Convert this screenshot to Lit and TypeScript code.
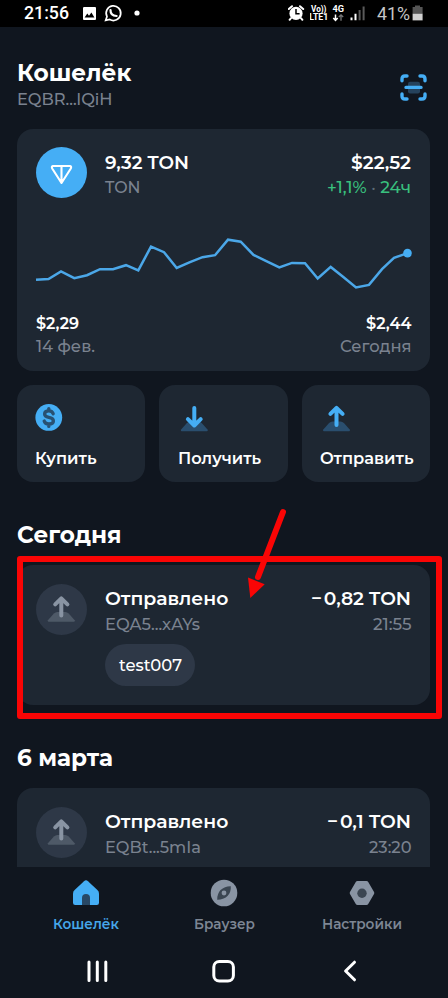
import { LitElement, html, css, svg } from "lit";
import { customElement } from "lit/decorators.js";

/* One line of text, fitted to a width; its box is exactly as tall as the capitals. */
const label = (text: string, width: number, size: number, cls = "") => {
  const cap = size * 0.7;
  return html`<svg class="label ${cls}" width=${width} height=${cap}>
    <text x="0" y=${cap} font-size=${size} textLength=${width} lengthAdjust="spacingAndGlyphs">${text}</text>
  </svg>`;
};

const points: [number, number][] = [
  [0, 49.8], [12.5, 49], [25, 41.4], [38.3, 48.2], [51, 45.2], [64, 39.2], [77, 39.2], [90, 35.2], [102.3, 40.4],
  [115, 16.6], [128, 22.2], [140.7, 38], [154, 32.2], [166.5, 27.2], [179, 25.2], [192, 9.7], [204.7, 11.7],
  [217.5, 24.9], [230.3, 31.2], [243.3, 37.4], [256, 32.9], [269, 33.2], [281.7, 48.5], [294.7, 36.9],
  [307, 46.7], [320, 57.4], [333, 54.9], [346, 39.2], [358, 27.9], [371.5, 23.1],
];

const arrowUp = svg`
  <path class="base" d="M2.6 27.2 L8.6 20.6 Q10.2 19 12 19 H20 Q21.8 19 23.4 20.6 L29.4 27.2 Q29.8 28.8 28.4 28.8 H3.6 Q2.2 28.8 2.6 27.2Z"/>
  <path class="stroke" d="M16 22.6V6M9.9 11.4L16 5.4L22.1 11.4"/>`;
const arrowDown = svg`
  <path class="base" d="M2.6 27.2 L8.6 20.6 Q10.2 19 12 19 H20 Q21.8 19 23.4 20.6 L29.4 27.2 Q29.8 28.8 28.4 28.8 H3.6 Q2.2 28.8 2.6 27.2Z"/>
  <path class="stroke" d="M16 5.6V22M9.6 16.6L16 23L22.4 16.6"/>`;

interface Tx { addr: string; addrW: number; amount: string; amountW: number; time: string; timeW: number; note?: string }

@customElement("app-root")
export class AppRoot extends LitElement {
  static styles = css`
    :host { display: block; font-family: Montserrat, Inter, "Noto Sans", sans-serif; }
    * { box-sizing: border-box; }
    svg { display: block; flex: none; }
    .label { overflow: visible; fill: #fff; font-weight: 600; }
    .bold { font-weight: 700; }
    .muted { fill: #7a828f; font-weight: 500; }
    .green { fill: #39c07e; font-weight: 500; }
    .medium { font-weight: 500; }
    .dot { fill: #5d6b75; }
    .screen { position: relative; height: 998px; background: #10161f; display: flex; flex-direction: column; overflow: hidden; }
    .status { height: 27px; flex: none; background: #000; display: flex; align-items: center; padding: 0 0 0 24px; }
    .roboto { font-family: Roboto, sans-serif; font-weight: 500; }
    .dim { fill: #c6c6c6; font-weight: 400; }
    .sysicons { margin-left: 14px; }
    .right { margin-left: auto; }
    .content { height: 840px; flex: none; overflow: hidden; padding: 0 18px 0 17px; }
    .header { height: 102px; display: flex; justify-content: space-between; padding-top: 37.5px; }
    .names { display: flex; flex-direction: column; gap: 14px; }
    .scan { margin: 9px 3px 0 0; }
    .card { background: #1e2732; border-radius: 16px; }
    .balance { height: 242px; padding: 18.4px 19px 0 18.5px; }
    .row { display: flex; }
    .col { display: flex; flex-direction: column; }
    .end { align-items: flex-end; margin-left: auto; }
    .coin { margin-right: 18.5px; }
    .top { height: 82.6px; }
    .sums { gap: 12.6px; padding-top: 9px; }
    .chart { overflow: visible; }
    .range { justify-content: space-between; margin-top: 17.8px; }
    .prices { gap: 12px; }
    .actions { display: grid; grid-template-columns: repeat(3, 1fr); gap: 14px; margin-top: 14px; height: 97px; }
    .action { padding: 16px 0 0 18.3px; gap: 20.8px; }
    .blue .stroke { stroke: #45aef5; }
    .blue .base { fill: #2a4e6e; }
    .stroke { fill: none; stroke: #8994a3; stroke-width: 4; stroke-linecap: round; stroke-linejoin: round; }
    .base { fill: #4e5967; }
    .day { padding-top: 45.2px; height: 83px; }
    .tx { padding: 19px 19px 0 18.5px; height: 140px; }
    .lines { gap: 13.4px; padding-top: 8.2px; }
    .note { margin-top: 0; height: 42px; width: 90px; border-radius: 21px; background: #2e3847; display: flex; align-items: center; justify-content: center; padding-top: 2px; }
    .tabs { height: 74px; flex: none; padding: 11px 17px 0; display: grid; grid-template-columns: repeat(3, 1fr); background: #10161f; }
    .tab { align-items: center; gap: 10px; }
    .tab .label { fill: #7d8694; }
    .tab.active .label { fill: #45a6ea; }
    .nav { flex: 1; background: #10161f; display: grid; grid-template-columns: 125px 127px 1fr; padding: 18px 91px 0 86px; }
    .navicon { fill: none; stroke: #fff; stroke-width: 3; stroke-linecap: round; stroke-linejoin: round; }
    .marks { position: absolute; left: 0; top: 0; }
  `;

  private tx(t: Tx) {
    return html`<div class="card tx row">
      <svg class="coin" width="51" height="51" viewBox="0 0 51 51">
        <circle cx="25.5" cy="25.5" r="25.5" fill="#2e3847"/>
        <g transform="translate(9.3 9)">${arrowUp}</g>
      </svg>
      <div class="col lines">
        ${label("Отправлено", 123.5, 19)}
        ${label(t.addr, t.addrW, 16.2, "muted")}
        ${t.note ? html`<div class="note">${label(t.note, 63, 16.2, "medium")}</div>` : ""}
      </div>
      <div class="col lines end">
        ${label(t.amount, t.amountW, 19)}
        ${label(t.time, t.timeW, 16.2, "muted")}
      </div>
    </div>`;
  }

  render() {
    const last = points[points.length - 1];
    return html`<div class="screen">
      <div class="status">
        ${label("21:56", 45, 17.6, "roboto")}
        <svg class="sysicons" width="60" height="27" viewBox="0 0 60 27">
          <path fill="#fff" fill-rule="evenodd" d="M1.2 7H12Q13 7 13 8V19Q13 20 12 20H1Q0 20 0 19V8Q0 7 1.2 7ZM1.6 17.6H11.4L8.4 12.6L6 15.8L4.3 13.6Z"/>
          <path fill="none" stroke="#fff" stroke-width="1.7" d="M22.7 20.4L24 16.6A7.3 7.3 0 1 1 26.8 19.5Z"/>
          <path fill="none" stroke="#fff" stroke-width="2.2" stroke-linecap="round" d="M27.5 10Q27.3 15.6 33.6 16"/>
          <circle cx="54" cy="13" r="2.6" fill="#fff"/>
        </svg>
        <svg class="right" width="22" height="27" viewBox="0 0 22 27">
          <circle cx="8" cy="13.4" r="6.6" fill="#fff"/>
          <path d="M8 9V13.8H11.6" fill="none" stroke="#000" stroke-width="1.5"/>
          <path d="M.8 9L4 6.2M15.2 9L12 6.2M3 18.2L1.6 19.8M13 18.2L14.4 19.8" stroke="#fff" stroke-width="2" stroke-linecap="round"/>
        </svg>
        <svg width="60" height="27" viewBox="0 0 60 27">
          <g fill="#fff" font-family="Roboto" font-weight="700">
            <text x="1" y="11.8" font-size="8.5" textLength="15.5" lengthAdjust="spacingAndGlyphs">Vo))</text>
            <text x="-.8" y="20" font-size="8.8" textLength="19" lengthAdjust="spacingAndGlyphs">LTE1</text>
            <text x="22.6" y="12" font-size="8.8" textLength="11.5" lengthAdjust="spacingAndGlyphs">4G</text>
          </g>
          <path d="M25.5 14.5V20M23.3 18L25.5 20.3L27.7 18" fill="none" stroke="#fff" stroke-width="1.5"/>
          <path d="M31 20.8V15M28.8 17L31 14.8L33.2 17" fill="none" stroke="#777" stroke-width="1.3"/>
          <path d="M41.5 17.6V20.2M45.5 13.8V20.2" stroke="#fff" stroke-width="2"/>
          <path d="M49.6 10V20.2M53.6 6.4V20.2" stroke="#5a5a5a" stroke-width="2"/>
        </svg>
        <svg width="7" height="1"></svg>
        ${label("41%", 33, 18, "roboto dim")}
        <svg width="38" height="27" viewBox="0 0 38 27">
          <path d="M2.6 7H5V5.6H10V7H12.6V14H2.6Z" fill="#555"/>
          <path d="M2.6 13.8H12.6V20.4H2.6Z" fill="#d0d0d0"/>
        </svg>
      </div>

      <div class="content">
        <div class="header">
          <div class="names">
            ${label("Кошелёк", 114.5, 22.8, "bold")}
            ${label("EQBR...lQiH", 95.5, 16.2, "muted")}
          </div>
          <svg class="scan" width="27" height="27" viewBox="0 0 27 27">
            <rect x="8" y="7.8" width="12" height="11.6" rx="2" fill="#25425c"/>
            <path d="M2 6.8V5Q2 2 5 2H7M20 2H22Q25 2 25 5V6.8M25 20V22Q25 25 22 25H20M7 25H5Q2 25 2 22V20M6 13.4H21" fill="none" stroke="#45aef5" stroke-width="3.4" stroke-linecap="round"/>
          </svg>
        </div>

        <div class="card balance">
          <div class="row top">
            <svg class="coin" width="51" height="51" viewBox="0 0 51 51">
              <circle cx="25.5" cy="25.5" r="25.5" fill="#45aef5"/>
              <path d="M17 19H34Q35.8 19.5 34.8 21.5L25.5 36L16.2 21.5Q15.2 19.5 17 19ZM25.5 19V35" fill="none" stroke="#fff" stroke-width="2.1" stroke-linejoin="round"/>
            </svg>
            <div class="col sums">
              ${label("9,32 TON", 84, 19)}
              ${label("TON", 35.5, 16.2, "muted")}
            </div>
            <div class="col sums end">
              ${label("$22,52", 60, 19)}
              <svg class="label green" width="84" height="11.3">
                <text x="0" y="11.3" font-size="16.2" textLength="84" lengthAdjust="spacingAndGlyphs">+1,1% <tspan class="dot">·</tspan> 24ч</text>
              </svg>
            </div>
          </div>
          <svg class="chart" width="375" height="70" viewBox="0 0 375 70">
            <polyline points=${points.map((p) => p.join(",")).join(" ")} fill="none" stroke="#4ba7e8" stroke-width="2.5"/>
            <circle cx=${last[0]} cy=${last[1]} r="4.3" fill="#45aef5"/>
          </svg>
          <div class="row range">
            <div class="col prices">
              ${label("$2,29", 43, 16.4)}
              ${label("14 фев.", 59, 16.2, "muted")}
            </div>
            <div class="col prices end">
              ${label("$2,44", 45.5, 16.4)}
              ${label("Сегодня", 71.5, 16.2, "muted")}
            </div>
          </div>
        </div>

        <div class="actions">
          <div class="card action col">
            <svg class="blue" width="32" height="31" viewBox="0 0 32 31">
              <circle cx="13.8" cy="16.4" r="13.4" fill="#45aef5"/>
              <path d="M18.2 12.8Q17.4 9.8 13.8 9.8Q9.6 9.8 9.6 13Q9.6 15.6 13.8 16.3Q18.4 17 18.4 19.9Q18.4 23 13.8 23Q10 23 9.2 20M13.8 7.6V9.8M13.8 23V25.4" fill="none" stroke="#285173" stroke-width="3.3" stroke-linecap="round"/>
            </svg>
            ${label("Купить", 61.5, 16.2)}
          </div>
          <div class="card action col">
            <svg class="blue" width="32" height="31" viewBox="0 0 32 31"><g transform="translate(.3 1.5)">${arrowDown}</g></svg>
            ${label("Получить", 83, 16.2)}
          </div>
          <div class="card action col">
            <svg class="blue" width="32" height="31" viewBox="0 0 32 31"><g transform="translate(.5 1.5)">${arrowUp}</g></svg>
            ${label("Отправить", 93.5, 16.2)}
          </div>
        </div>

        <div class="day">${label("Сегодня", 104.5, 22.8, "bold")}</div>
        ${this.tx({ addr: "EQA5...xAYs", addrW: 95, amount: "−\u200a0,82 TON", amountW: 100, time: "21:55", timeW: 38.5, note: "test007" })}
        <div class="day">${label("6 марта", 96, 22.8, "bold")}</div>
        ${this.tx({ addr: "EQBt...5mIa", addrW: 96, amount: "−\u200a0,1 TON", amountW: 84, time: "23:20", timeW: 42.5 })}
      </div>

      <div class="tabs">
        <div class="tab active col">
          <svg width="30" height="31" viewBox="0 0 30 31">
            <path d="M13 3.2Q15 1.4 17 3.2L26.4 12Q28 13.5 28 15.4V24.8Q28 27 25.8 27H4.2Q2 27 2 24.8V15.4Q2 13.5 3.6 12Z" fill="#45aef5"/>
            <path d="M11 27V20Q11 16 15 16Q19 16 19 20V27Z" fill="#284865"/>
          </svg>
          ${label("Кошелёк", 66, 13.9)}
        </div>
        <div class="tab col">
          <svg width="30" height="31" viewBox="0 0 30 31">
            <circle cx="15" cy="15" r="13.3" fill="#8994a3"/>
            <path d="M21.8 8.2Q22.2 14 18.5 18Q14 22 8.2 21.8Q8 16 11.5 12Q16 8 21.8 8.2Z" fill="#3b4652"/>
            <circle cx="15" cy="15" r="2.4" fill="#8994a3"/>
          </svg>
          ${label("Браузер", 61, 13.9)}
        </div>
        <div class="tab col">
          <svg width="30" height="31" viewBox="0 0 30 31">
            <path d="M10.5 5H19.5L25.3 15L19.5 25H10.5L4.7 15Z" fill="#8994a3" stroke="#8994a3" stroke-width="4" stroke-linejoin="round"/>
            <circle cx="15" cy="15.2" r="4.7" fill="#3b4652"/>
          </svg>
          ${label("Настройки", 80, 13.9)}
        </div>
      </div>

      <div class="nav">
        <svg class="navicon" width="24" height="24" viewBox="0 0 24 24"><path d="M3 3V21.5M11.3 3V21.5M19.8 3V21.5"/></svg>
        <svg class="navicon" width="25" height="24" viewBox="0 0 25 24"><rect x="2.8" y="2.5" width="19.6" height="19.6" rx="5.5"/></svg>
        <svg class="navicon" width="20" height="24" viewBox="0 0 20 24"><path d="M16.5 3.2L7.6 12L16.5 20.8"/></svg>
      </div>

      <svg class="marks" width="448" height="998" viewBox="0 0 448 998">
        <rect x="20" y="559" width="419" height="157" fill="none" stroke="#fa0505" stroke-width="6" stroke-linejoin="round"/>
        <path d="M283 512L258 577" stroke="#fa0505" stroke-width="6" stroke-linecap="round"/>
        <path d="M248 577.5L264.7 584.3L250.3 598Z" fill="#fa0505"/>
      </svg>
    </div>`;
  }
}
